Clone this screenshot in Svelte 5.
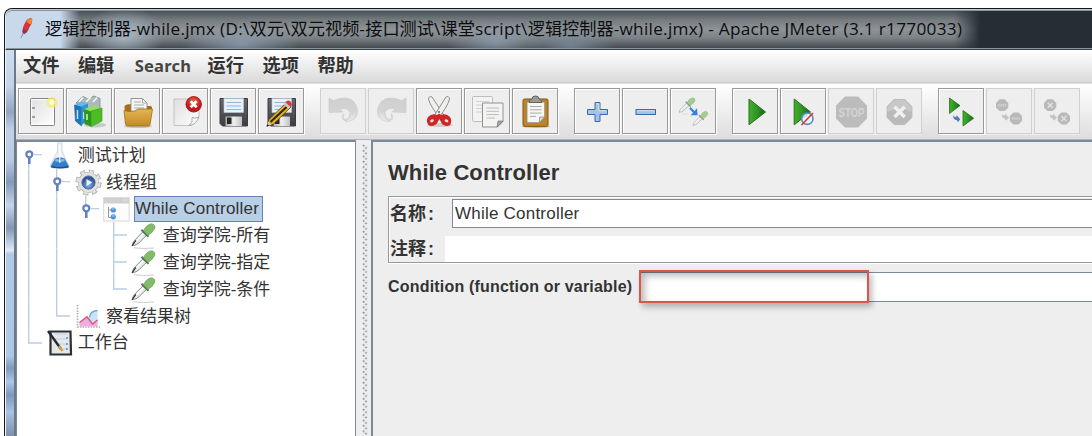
<script>
  const title = '逻辑控制器-while.jmx (D:\\双元\\双元视频-接口测试\\课堂script\\逻辑控制器-while.jmx) - Apache JMeter (3.1 r1770033)';
  const titleParts = title.match(/[\u4e00-\u9fff]+|[^\u4e00-\u9fff]+/g).map((text) => ({
    text,
    latin: text.charCodeAt(0) < 0x4e00
  }));

  const menus = ['文件', '编辑', 'Search', '运行', '选项', '帮助'];

  const groups = [
    [{ icon: 'new' }, { icon: 'templates' }, { icon: 'open' }, { icon: 'close' }, { icon: 'save' }, { icon: 'saveAs' }],
    [{ icon: 'undo', off: true }, { icon: 'redo', off: true }, { icon: 'cut' }, { icon: 'copy' }, { icon: 'paste' }],
    [{ icon: 'expand' }, { icon: 'collapse' }, { icon: 'toggle' }],
    [{ icon: 'start' }, { icon: 'startNoPause' }, { icon: 'stop', off: true }, { icon: 'shutdown', off: true }],
    [{ icon: 'remoteStart' }, { icon: 'remoteStop', off: true }, { icon: 'remoteShutdown', off: true }]
  ];

  const rows = [
    { guides: ['root'], icon: 'flask', label: '测试计划' },
    { guides: ['line', 'knob'], icon: 'gear', label: '线程组' },
    { guides: ['line', 'line', 'last'], icon: 'controller', label: 'While Controller', selected: true },
    { guides: ['line', 'line', 'none', 'tee'], icon: 'pipette', label: '查询学院-所有' },
    { guides: ['line', 'line', 'none', 'tee'], icon: 'pipette', label: '查询学院-指定' },
    { guides: ['line', 'line', 'none', 'end'], icon: 'pipette', label: '查询学院-条件' },
    { guides: ['line', 'end'], icon: 'chart', label: '察看结果树' },
    { guides: ['end'], icon: 'notebook', label: '工作台' }
  ];
</script>

{#snippet floppy()}
  <path d="M10 10.5H37.5V38H12.5L10 35.5Z" fill="url(#disk)" stroke="#3c3c40" />
  <rect x="14" y="10.5" width="19.5" height="14" fill="#e9f1f9" stroke="#bccbd8" stroke-width=".6" />
  <path d="M16.5 14.5H31M16.5 18H31M16.5 21.5H31" stroke="#8fb6dc" />
  <rect x="15.5" y="28.5" width="16.5" height="9.5" fill="url(#metal)" />
  <rect x="17" y="29.5" width="4.5" height="6.5" fill="#26262a" />
{/snippet}

{#snippet dropper(color)}
  <path d="M1.5 22.5Q2.5 18 5 16L12.5 8.5L16 12L8.5 19.5Q6 22 1.5 22.5Z" fill="#e6eaea" stroke="#898f8f" stroke-width="1" />
  <path d="M4 19.5L13 10.5" stroke="#fff" stroke-width="1.4" />
  <path d="M11 6.5L18 13.5" stroke="#587555" stroke-width="2.2" />
  <path d="M13 7.5Q15.5 1.5 21 .4Q25.5 1.5 24 5.5Q21.5 10.5 17.3 11.8Z" fill={color} stroke="#6fa45c" stroke-width=".7" />
{/snippet}

{#snippet tool(name)}
  <svg class="tool-icon" viewBox="0 0 46 46">
    {#if name === 'new'}
      <rect x="12.5" y="10.5" width="24" height="27" rx="1" fill="url(#paper)" stroke="#858585" />
      <rect x="13.7" y="11.7" width="21.6" height="24.6" fill="none" stroke="#fff" />
      <path d="M14 20h3M14 29h3" stroke="#888" stroke-width="1.5" />
      <circle cx="34" cy="14.5" r="5.5" fill="#fae96b" opacity=".75" />
      <circle cx="34" cy="14.5" r="2.6" fill="#fffde0" />
    {:else if name === 'templates'}
      <ellipse cx="29" cy="37" rx="11" ry="2.5" fill="#999" opacity=".45" />
      <path d="M10 15L17 8.5L22 11L28 8L34 10.5V26L20 36Z" fill="#aeb9bc" stroke="#7d898c" stroke-width=".8" />
      <path d="M13 14L17 9.5M20 14L25 9M27 14L31 9.5" stroke="#f0f5f5" stroke-width="1.7" />
      <path d="M8.5 17L15.5 18.5V38L9.5 33Z" fill="#1d74b6" stroke="#155a92" stroke-width=".6" />
      <path d="M9 16.5L15 13.5L23 15L16 19Z" fill="#67b8e8" />
      <path d="M15.5 18.5L22 15.5V32L15.5 37.5Z" fill="#3094d2" />
      <path d="M11.5 22V31M17.8 24V31" stroke="#bce5fa" stroke-width="1.5" />
      <path d="M18 21L25 22.5V38.5L18.5 36Z" fill="#2d961f" />
      <path d="M18 21L28 17.5L36 21L25 23.5Z" fill="#92df5e" />
      <path d="M25 23L36 20V33L25 38.7Z" fill="#4dbd26" stroke="#359819" stroke-width=".6" />
      <path d="M21 26v6" stroke="#c1f3a2" stroke-width="1.6" />
    {:else if name === 'open'}
      <ellipse cx="24" cy="38.2" rx="14" ry="1.7" fill="#999" opacity=".5" />
      <path d="M10.5 20Q10 17 13 16.5L18 16L20 18H36Q38.5 18 38 21L35 36H13Z" fill="#a96e13" />
      <path d="M17 25V10.5H28.5L33 15V26Z" fill="#f4f5f5" stroke="#8c8c8c" stroke-width=".9" />
      <path d="M28.5 10.5V15H33M20 14H27M20 17H30M20 20H30" fill="none" stroke="#aaa" />
      <path d="M10 22.5Q15 24 21 23L24 21H38.5L36 36.5Q35.5 38 34 38H14Q12 38 11.5 36Z" fill="url(#folder)" stroke="#9b6b16" stroke-width=".8" />
    {:else if name === 'close'}
      <path d="M12 11H37V29L29.5 37.5H12Z" fill="url(#paper)" stroke="#c3c3c3" />
      <path d="M37 29Q33 31 30 29.5Q31.5 34 27 37.5Q34 37 37 29Z" fill="#f8f8f8" stroke="#999" stroke-width=".8" />
      <circle cx="31.7" cy="16.3" r="7.7" fill="url(#danger)" stroke="#a91616" />
      <path d="M28.7 13.3L34.7 19.3M34.7 13.3L28.7 19.3" stroke="#fff" stroke-width="2.7" />
    {:else if name === 'save'}
      {@render floppy()}
    {:else if name === 'saveAs'}
      {@render floppy()}
      <path d="M9 38L11 31.5L28.5 14.5L33 19L15.5 36Z" fill="#e1b326" stroke="#5c4411" stroke-width=".8" />
      <path d="M12.5 34L31 16.8" stroke="#29240f" stroke-width="2" />
      <path d="M27 14.5L29 12.7Q31 12 33 14Q34.5 16 33.5 18L32 19.5Z" fill="#d83a38" />
      <path d="M25.5 16L27.5 14.2L32.5 19L30.5 21Z" fill="#c8c8c8" />
      <path d="M8.5 38.5L10.2 33.5L13.7 36.7Z" fill="#ddc7a0" />
      <path d="M8.5 38.7L9.4 36L11.3 37.8Z" fill="#222" />
    {:else if name === 'undo' || name === 'redo'}
      <g transform={name === 'redo' ? 'matrix(-1 0 0 1 47 0)' : undefined}>
        <path d="M9 10L13.5 12.5Q27 7 34 14Q40 22 36 29Q33 33.5 25 33.5Q32 29 30 24Q27 19 20 21L23 24L9 24.5Z" fill="url(#fade)" stroke="#cccccc" stroke-width=".7" />
        <path d="M24 26Q21 30 25 32Q31 31 30 25" fill="none" stroke="#d6d6d6" stroke-width="2" />
      </g>
    {:else if name === 'cut'}
      <ellipse cx="24" cy="37" rx="13" ry="2" fill="#bbb" opacity=".6" />
      <path d="M12.5 11Q13 7.5 16 9L28.5 28L24.5 30Q15 20 12.5 11Z" fill="#f0f0ed" stroke="#8d8d8a" />
      <path d="M33.5 11Q33 7.5 30 9L18 28L22 30Q31 20 33.5 11Z" fill="#f0f0ed" stroke="#8d8d8a" />
      <circle cx="23" cy="24" r="1" fill="#666" />
      <path d="M12 29Q16 25 21 27L23 25.5L25 27Q30 25 34 29Q36.5 33 34 37Q30 39.5 26 36L23.5 31L20.5 36Q16 39.5 12.5 37Q9.5 33 12 29Z" fill="#cf2523" />
      <ellipse cx="16" cy="32.8" rx="2" ry="1.4" fill="#f0dede" transform="rotate(-30 16 32.8)" />
      <ellipse cx="30.5" cy="32.8" rx="2" ry="1.4" fill="#f0dede" transform="rotate(30 30.5 32.8)" />
    {:else if name === 'copy'}
      <rect x="8.5" y="8.5" width="20" height="25" rx="1" fill="#f3f3f3" stroke="#bdbdbd" />
      <path d="M12 13.5H25M12 17H25M12 20.5H18M12 24H18" stroke="#d0d0d0" />
      <path d="M18.5 15H39V33.5L33.5 39H18.5Z" fill="#f3f3f2" stroke="#929292" />
      <path d="M22.5 20H35M22.5 23.3H35M22.5 26.6H35M22.5 30H31" stroke="#bbb" />
      <path d="M39 33H34L33 39Z" fill="#a7a7a4" stroke="#777" stroke-width=".7" />
    {:else if name === 'paste'}
      <ellipse cx="24" cy="38.5" rx="14" ry="1.5" fill="#999" opacity=".6" />
      <rect x="11" y="11" width="25" height="27.3" rx="1.5" fill="#bf8426" stroke="#81530e" />
      <path d="M15 14H32.7V29L27.5 34.7H15Z" fill="#f6f6f4" stroke="#888" stroke-width=".8" />
      <path d="M18 18.5H29.5M18 21.8H29.5M18 25.1H29.5M18 28.4H24" stroke="#aaa" />
      <path d="M32.5 29H27.5V34.7Z" fill="#d7d7d4" stroke="#888" stroke-width=".7" />
      <path d="M17 14.5Q17 11.5 20 11Q20 8 23.5 8Q27 8 27 11Q30 11.5 30 14.5Z" fill="#999c95" stroke="#62655f" />
    {:else if name === 'expand'}
      <path d="M21 14.5H26V21.5H33.5V26.5H26V33.5H21V26.5H13.5V21.5H21Z" fill="#a5c3e4" stroke="#3b68a8" />
      <path d="M22.2 15.7H24.8V22.8H32.2" fill="none" stroke="#d3e2f1" />
    {:else if name === 'collapse'}
      <rect x="14" y="21.5" width="19.5" height="5" fill="#a5c3e4" stroke="#3b68a8" />
      <path d="M15 22.7H32.5" stroke="#d3e2f1" />
    {:else if name === 'toggle'}
      <g transform="translate(8 9.5) scale(.7 .66)" opacity=".7">{@render dropper('#84bd6c')}</g>
      <g transform="translate(22 23) scale(.65 .64)" opacity=".7">{@render dropper('#84bd6c')}</g>
      <path d="M12 26H18" stroke="#ddd" />
      <path d="M20.5 19L24.5 23L27 20.2L27.7 27.2H20.5L23 24.7L19.3 20.8Z" fill="#397fea" />
    {:else if name === 'start'}
      <path d="M17 11L33.5 24L17 36.8Z" fill="url(#go)" stroke="#2b6d1d" />
    {:else if name === 'startNoPause'}
      <path d="M14.2 11L30.5 24L14.2 36.8Z" fill="url(#go)" stroke="#2b6d1d" />
      <circle cx="27.3" cy="30.7" r="5.7" fill="#edf3fa" fill-opacity=".8" stroke="#558bc5" stroke-width="1.6" />
      <path d="M21.5 37L33 25" stroke="#d53c35" stroke-width="1.7" />
    {:else if name === 'stop'}
      <path d="M17 8.5H30L39 17.5V30.5L30 39.5H17L8 30.5V17.5Z" fill="#bcbcbc" />
      <text x="23.5" y="28.8" text-anchor="middle" class="stop-text" textLength="26" lengthAdjust="spacingAndGlyphs">STOP</text>
    {:else if name === 'shutdown'}
      <path d="M18.2 11H28.8L36.4 18.5V29.4L28.8 37H18.2L10.6 29.4V18.5Z" fill="#bababa" />
      <path d="M11.5 19L18.5 12H28.5L35.5 19V24Q24 18 11.5 24Z" fill="#c8c8c8" />
      <path d="M18.5 18.8L28.7 29M28.7 18.8L18.5 29" stroke="#f0f0f0" stroke-width="3.4" />
    {:else if name === 'remoteStart'}
      <path d="M11.5 10L22 17.6L11.5 25.5Z" fill="url(#go)" stroke="#2b6d1d" stroke-width=".8" />
      <path d="M25 22.5L35.7 30.2L25 38Z" fill="url(#go)" stroke="#2b6d1d" stroke-width=".8" />
      <path d="M15 27.3Q16 29.3 18.5 28.8V27L22.2 31.2L20 34.3L19 32.3Q15 32 15 27.3Z" fill="#527bbb" />
    {:else}
      <path d="M13.5 11.3H18.7L22.3 15V19.5L18.7 23H13.5L10 19.5V15Z" fill="#b9b9b9" />
      <path d="M27.4 24.5H32.5L36 28V33L32.5 36.5H27.4L23.8 33V28Z" fill="#b9b9b9" />
      <path d="M15.7 26Q17 28 19 27.5V25.5L23 29.5L20 32.8L19 30.7Q15.7 30.5 15.7 26Z" fill="#c2c2c2" />
      {#if name === 'remoteStop'}
        <path d="M12.2 17.2H20.2M26 30.5H34" stroke="#cfcfcf" stroke-width="2.4" stroke-dasharray="1.6 .5" />
      {:else}
        <path d="M13.7 14.7L18.7 19.7M18.7 14.7L13.7 19.7M27.4 28L32.4 33M32.4 28L27.4 33" stroke="#e0e0e0" stroke-width="1.6" />
      {/if}
    {/if}
  </svg>
{/snippet}

{#snippet node(name)}
  <svg class="node-icon" viewBox="0 0 28 27">
    {#if name === 'flask'}
      <path d="M11.5 1V9L4.5 23Q4 26 7 26H21Q24 26 22.5 23L16 9V1Z" fill="#edf1f3" stroke="#d3d9dc" />
      <path d="M9 16.5Q14 14.5 18.5 16.5L22.5 23.5Q23.5 26 21 26H7Q4 26 5 23.5Z" fill="#347fc8" />
      <path d="M9.5 16.5Q14 18.5 18 16.5L18.7 19Q14 21 8.5 19Z" fill="#82bbe7" />
      <path d="M6 24.5Q14 27 22 24.5" fill="none" stroke="#194f99" stroke-width="1.5" />
      <path d="M13.8 3V21" stroke="#fff" stroke-width="1.5" opacity=".7" />
    {:else if name === 'gear'}
      <circle cx="13.5" cy="13.5" r="11.3" fill="none" stroke="#aaaaaa" stroke-width="3.6" stroke-dasharray="5.2 3.675" />
      <circle cx="13.5" cy="13.5" r="9.7" fill="#e4e4e4" stroke="#aaaaaa" stroke-width="1.6" />
      <circle cx="13.5" cy="13.5" r="11" fill="none" stroke="#e2e2e2" stroke-width="2.6" stroke-dasharray="3.6 5.04" stroke-dashoffset="-.8" />
      <circle cx="13.5" cy="13.5" r="8.6" fill="none" stroke="#e2e2e2" stroke-width="2.6" />
      <circle cx="13.5" cy="13.5" r="6.6" fill="url(#orb)" stroke="#526c9b" />
      <path d="M11.5 10L17.3 13.5L11.5 17Z" fill="#e9f2fc" />
    {:else if name === 'controller'}
      <rect x=".7" y="2" width="25.5" height="23" fill="#fdfdfd" stroke="#d8d8d8" />
      <rect x=".7" y="1.5" width="25.5" height="6" fill="#d0d0d0" />
      <path d="M20 4h1M23 4h1" stroke="#fff" />
      <path d="M5.5 11V21.5H9M5.5 14H9" fill="none" stroke="#999" />
      <circle cx="10.3" cy="14" r="2.6" fill="#4b91da" />
      <circle cx="10.3" cy="20.8" r="2.6" fill="#4b91da" />
      <path d="M9 13H11.5M9 20H11.5" stroke="#b1d8f8" />
    {:else if name === 'pipette'}
      <g transform="translate(-.5 1.3)">{@render dropper('#84bb69')}</g>
      <path d="M1.2 23.8Q3 20.5 5 18.5" fill="none" stroke="#333" stroke-width="1.2" />
      <path d="M3 25.8Q12 27 23 26" fill="none" stroke="#ccc" />
    {:else if name === 'chart'}
      <path d="M2.5 2V24H25" fill="none" stroke="#aaa" stroke-width="1.5" stroke-dasharray="1.5 1.2" />
      <path d="M4.5 19.5L12.5 13.5L17.5 20.5L22.5 16V23.5H4.5Z" fill="#eaaee0" />
      <path d="M15 17Q12 9 22.5 7.5V16Q18 22 15 17Z" fill="#c9e4f8" />
      <path d="M4.5 19.5L12 13.7L17.5 21L22.5 17" fill="none" stroke="#df5275" stroke-width="1.5" />
      <path d="M14.5 14.5Q15 8 22.5 7.5" fill="none" stroke="#64a1de" stroke-width="1.3" />
    {:else}
      <path d="M4.5 2.5H24.5L25 25.5H4.5Z" fill="#e4e8eb" stroke="#2e3032" stroke-width="2.2" />
      <path d="M9 5H21M9 10H21M11 15H21M14 20H21" stroke="#b9cbdf" stroke-width=".8" />
      <path d="M20 9h2M20 15h2M20 20h2" stroke="#4b91dd" stroke-width="1.4" />
      <path d="M2 2L15 20" stroke="#28292b" stroke-width="2.4" />
      <path d="M13 17L16.5 22" stroke="#d5a23b" stroke-width="2.3" />
    {/if}
  </svg>
{/snippet}

<svg class="defs" aria-hidden="true">
  <defs>
    <linearGradient id="paper" x2="1" y2="1"><stop stop-color="#dedede" /><stop offset="1" stop-color="#fff" /></linearGradient>
    <linearGradient id="disk" y2="1" x2="0"><stop stop-color="#66666b" /><stop offset="1" stop-color="#3d3d42" /></linearGradient>
    <linearGradient id="metal" x2="1"><stop stop-color="#aaa" /><stop offset=".5" stop-color="#f0f0f0" /><stop offset="1" stop-color="#c1c1c1" /></linearGradient>
    <linearGradient id="folder" x2="0" y2="1"><stop stop-color="#e4b653" /><stop offset="1" stop-color="#c28b25" /></linearGradient>
    <linearGradient id="fade" x2="0" y2="1"><stop stop-color="#cfcfcf" /><stop offset=".55" stop-color="#d3d3d3" /><stop offset="1" stop-color="#ececec" /></linearGradient>
    <linearGradient id="go" x2="1" y2="0"><stop stop-color="#42b12a" /><stop offset=".5" stop-color="#2e9424" /><stop offset="1" stop-color="#1f5d1c" /></linearGradient>
    <radialGradient id="danger" cy=".3"><stop stop-color="#ed6252" /><stop offset="1" stop-color="#bd1b1b" /></radialGradient>
    <radialGradient id="orb" cy=".7"><stop stop-color="#87b5e8" /><stop offset="1" stop-color="#345793" /></radialGradient>
  </defs>
</svg>

<div class="screen">
  <div class="window">
    <header class="titlebar">
      <svg class="feather" viewBox="0 0 14 24">
        <path d="M12 1Q7 1 5 6Q1.5 12 3 17Q8 16 9.5 10Q13 6 12 1Z" fill="#cf363d" />
        <path d="M12 1Q8 1.5 6.5 5L10.5 7.5Q13 4 12 1Z" fill="#ec8b36" />
        <path d="M3 12Q2 15 3 17Q6 17 7.5 14Z" fill="#8b326a" />
        <path d="M3.5 16L.8 21" stroke="#8580ac" />
      </svg>
      <span class="title">{#each titleParts as part}<span class:latin={part.latin}>{part.text}</span>{/each}</span>
    </header>
    <div class="body">
      <div class="frame"></div>
      <div class="content">
        <nav class="menubar">
          {#each menus as menu}<span class:search={menu === 'Search'}>{menu}</span>{/each}
        </nav>
        <div class="toolbar">
          {#each groups as group}
            <div class="group">
              {#each group as item}
                <button class="tool" class:off={item.off} aria-label={item.icon}>{@render tool(item.icon)}</button>
              {/each}
            </div>
          {/each}
        </div>
        <div class="split">
          <div class="tree">
            {#each rows as row}
              <div class="row">
                {#each row.guides as guide}
                  <svg class="guide" viewBox="0 0 28.3 26.8">
                    {#if guide === 'line'}
                      <path d="M10.7 0V26.8" />
                    {:else if guide === 'tee'}
                      <path d="M10.7 0V26.8M10.7 13H24" />
                    {:else if guide === 'end'}
                      <path d="M10.7 0V13H24" />
                    {:else if guide !== 'none'}
                      {#if guide !== 'root'}<path d="M10.7 0V9" />{/if}
                      {#if guide !== 'last'}<path d="M10.7 20V26.8" />{/if}
                      <path d="M16 12.6H24" />
                      <path class="stem" d="M11.3 14V22" />
                      <circle class="ring" cx="11.3" cy="12.3" r="3" />
                    {/if}
                  </svg>
                {/each}
                {@render node(row.icon)}
                <span class="label" class:selected={row.selected}>{row.label}</span>
              </div>
            {/each}
          </div>
          <div class="divider"></div>
          <main class="panel">
            <h1>While Controller</h1>
            <div class="details">
              <div class="field name"><label for="name">名称<b>:</b></label><input id="name" value="While Controller" /></div>
              <div class="field comment"><label for="comment">注释<b>:</b></label><input id="comment" /></div>
            </div>
            <div class="condition">
              <label for="cond">Condition (function or variable)</label>
              <div class="cond-box"><input id="cond" /><div class="highlight"></div></div>
            </div>
          </main>
        </div>
      </div>
    </div>
  </div>
</div>

<style>
  :global(body) { background: #fff; overflow: hidden; }
  * { box-sizing: border-box; }
  .defs { position: absolute; width: 0; height: 0; }
  .screen { height: 436px; width: 1092px; padding: 8px 0 0 4px; overflow: hidden; color: #333; font-family: 'Liberation Sans', 'Noto Sans CJK SC', sans-serif; }
  .window { height: 428px; display: flex; flex-direction: column; border: solid #14171c; border-width: 1px 0 0 1px; border-radius: 8px 0 0 0; overflow: hidden; background: #aebfd5; }
  .titlebar {
    height: 41px; flex: none; display: flex; align-items: center; padding: 0 0 2px 14px;
    border-top: 1px solid #c4cbce; border-left: 1px solid #e7eef6; border-bottom: 1px solid #3a4046; border-radius: 7px 0 0 0;
    box-shadow: inset 0 -1px #8a929a, inset 0 1px #88949a;
    background:
      linear-gradient(90deg, #c9d9ec 0, #c9d9ec 54px, #c9d9ec00 74px),
      radial-gradient(ellipse 40px 30px at 118px 26px, #b6c5d5bb, #b6c5d500),
      radial-gradient(ellipse 60px 22px at 235px 34px, #98abc0aa, #98abc000),
      radial-gradient(ellipse 50px 22px at 490px 32px, #97a7b9aa, #97a7b900),
      radial-gradient(ellipse 45px 18px at 565px 36px, #8394a8aa, #8394a800),
      linear-gradient(90deg, #262e3500 948px, #262e35 974px),
      linear-gradient(#444c51 0, #747b7f 25%, #8d9396 50%, #7b8286 72%, #3d454b 100%);
  }
  .feather { width: 14px; height: 24px; flex: none; }
  .title { margin-left: 11px; font: 17.2px/24px 'Open Sans', 'Noto Sans CJK SC', sans-serif; color: #0c0d10; white-space: pre; }
  .latin { letter-spacing: 0.29px; }
  .body { display: flex; flex: 1; min-height: 0; }
  .frame {
    width: 11px; flex: none; border-left: 1px solid #f1f6fb; border-right: 2px solid #6c7986;
    background:
      linear-gradient(#cddcee 0, #c3d3e8 36px, #92a6c1 62px, #c0d1e7 80px, #b9cbe3 110px, #8399b8 132px, #c4d5ea 155px, #8297b4 178px, #d4e1f1 198px, #e3ebf6 200px, #b1c9e8 204px, #adc7e7 306px, #8198bc 318px, #adc7e7 332px, #7f97bb 345px, #a8c2e3 362px, #7d90ac 386px);
  }
  .content { flex: 1; min-width: 0; display: flex; flex-direction: column; background: #eee; }
  .menubar { height: 33px; flex: none; display: flex; gap: 18.5px; padding: 0 0 1px 7px; align-items: center; font-weight: 700; font-size: 18.2px; background: linear-gradient(#fff, #dadada); border-bottom: 1px solid #ccc; }
  .menubar span { line-height: 24px; }
  .menubar .search { position: relative; left: 2px; font: 700 16.5px/24px 'Noto Sans', sans-serif; letter-spacing: .2px; color: #444; }
  .toolbar { height: 56px; flex: none; display: flex; gap: 16px; padding: 4px 0 0 2px; background: linear-gradient(#fff, #ddd); border-top: 1px solid #dedede; }
  .group { display: flex; gap: 2px; height: 47px; background: #eee; }
  .tool { width: 46px; height: 46px; flex: none; margin: 0; padding: 0; background: #eee; border: 1px solid #999; box-shadow: 1px 1px #fff, inset 1px 1px #fff; }
  .tool.off { border-color: #d0d0d0; box-shadow: none; }
  .tool-icon { display: block; width: 46px; height: 46px; margin: -1px; }
  .stop-text { font: 700 12.5px 'Liberation Sans', sans-serif; fill: #d4d4d4; }
  .split { flex: 1; min-height: 0; display: flex; border-top: 1px solid #aeb5bd; }
  .tree { width: 340px; flex: none; background: #fff; border: solid #7a8a99; border-width: 2px 1px 0 1px; padding-left: 1px; }
  .row { height: 26.8px; display: flex; align-items: center; }
  .guide { width: 28.3px; height: 26.8px; flex: none; fill: none; stroke: #b8cfe5; stroke-width: 1.4; }
  .stem { stroke: #6382bf; stroke-width: 2.6; }
  .ring { stroke: #6382bf; stroke-width: 2.3; fill: #fff; }
  .node-icon { width: 28px; height: 27px; flex: none; }
  .label { margin-left: 3.5px; font-size: 17px; line-height: 25px; white-space: nowrap; }
  .label.selected { margin-left: 3px; padding: 0 3px 0 0; line-height: 24px; height: 26px; border: 1px solid #6382bf; background: #b8cfe5; letter-spacing: .2px; }
  .divider { width: 15px; flex: none; background-color: #eee; background-image: radial-gradient(circle at 1.5px 1.5px, #8f989f .8px, #0000 1.2px), radial-gradient(circle at 4px 4px, #8f989f .8px, #0000 1.2px); background-size: 5.4px 5.4px; background-clip: content-box; background-origin: content-box; padding: 4px 3px 0 6px; }
  .panel { flex: 1; min-width: 0; border: solid #7a8a99; border-width: 2px 0 0 2px; padding: 18px 0 0 15px; }
  h1 { margin: 0; font: 700 22px/26px 'Liberation Sans', sans-serif; letter-spacing: .1px; }
  .details { margin-top: 10px; height: 67px; border: solid #999; border-width: 1px 0 1px 1px; box-shadow: 0 1px #fff, inset 1px 1px #fff; padding: 2px 0 0 1px; }
  .field { display: flex; align-items: center; }
  .field label { flex: none; font-size: 18px; font-weight: 700; line-height: 24px; white-space: nowrap; }
  .field label b { margin-left: 2px; }
  .name label { width: 62px; }
  .comment label { width: 55px; }
  input { flex: 1; min-width: 0; margin: 0; border: 0; outline: 0; border-radius: 0; background: #fff; font: 17px 'Liberation Sans', sans-serif; color: #333; letter-spacing: .22px; }
  .name { height: 29px; }
  .name input { height: 29px; padding: 0 0 0 2px; border: solid #7a8a99; border-width: 1px 0 1px 1px; }
  .comment { margin-top: 8px; height: 26px; }
  .comment input { height: 26px; }
  .condition { margin-top: 9px; height: 30px; display: flex; align-items: center; }
  .condition label { width: 252px; flex: none; font-size: 16px; font-weight: 700; letter-spacing: .19px; white-space: nowrap; }
  .cond-box { position: relative; flex: 1; display: flex; height: 30px; }
  .cond-box input { border: solid #7a8a99; border-width: 1px 0 1px 1px; }
  .highlight { position: absolute; left: -1px; top: -2px; width: 230px; height: 33px; border: 2px solid #dc5548; box-shadow: 3px 4px 6px #0004, inset 4px 4px 7px #0004; }
</style>
